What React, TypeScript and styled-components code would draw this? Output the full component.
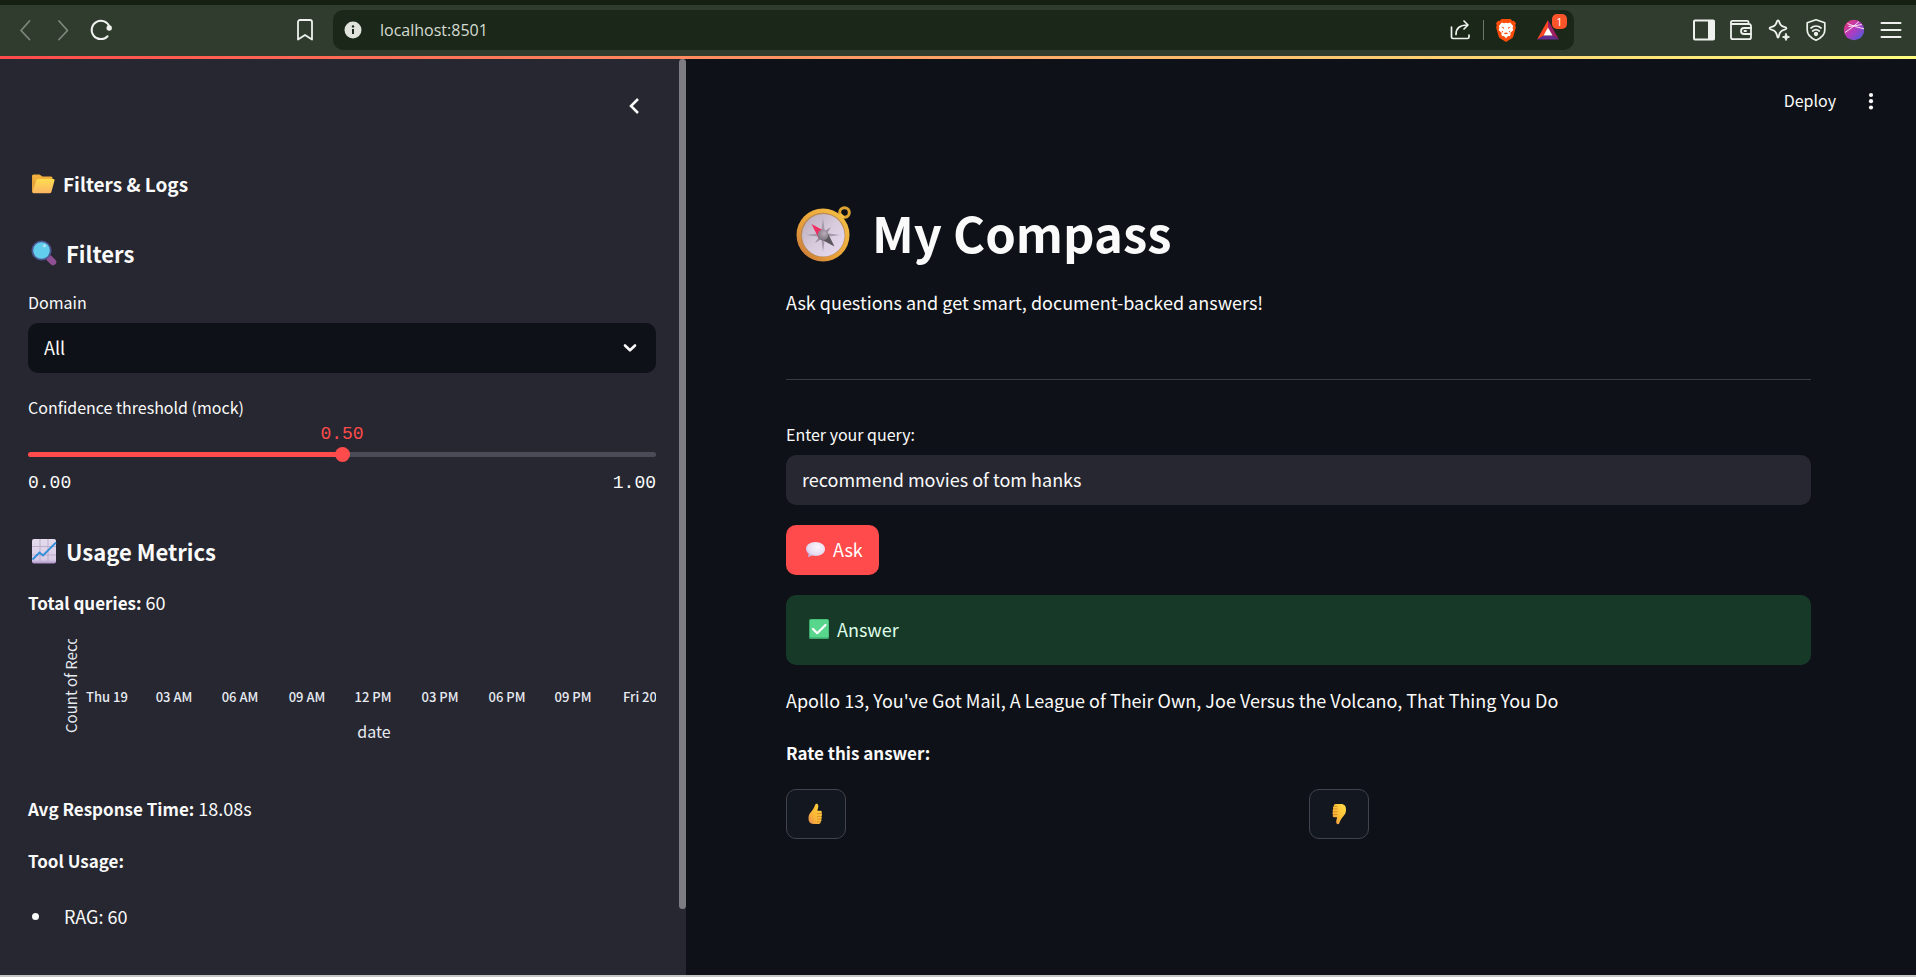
import React, { useState } from "react";
import styled, { createGlobalStyle } from "styled-components";

const GlobalStyle = createGlobalStyle`
  *, *::before, *::after { box-sizing: border-box; }
  body {
    margin: 0;
    background: #0e1117;
    color: #fafafa;
    font-family: "Noto Sans CJK JP", "Noto Sans", sans-serif;
    font-size: 18px;
    line-height: 28px;
  }
  button, input, select { font: inherit; color: inherit; margin: 0; }
  h1, h2, h3, p, ul { margin: 0; padding: 0; }
  svg { display: block; flex: none; }
`;

/* ---------- Browser chrome ---------- */

const Shell = styled.div`
  display: flex;
  flex-direction: column;
  min-height: 100vh;
  border-bottom: 2px solid #c6c6c6;
`;

const BrowserBar = styled.header`
  display: flex;
  align-items: center;
  height: 56px;
  padding: 0 13px 1px;
  background: #303d2e;
  border-top: 5px solid #162012;
`;

const NavGroup = styled.nav`
  display: flex;
  align-items: center;
  gap: 14px;
  flex: 0 0 320px;
`;

const BookmarkSlot = styled.div`
  margin-left: auto;
  margin-right: 16px;
`;

const ToolbarButton = styled.button<{ $dim?: boolean }>`
  display: grid;
  place-items: center;
  width: 24px;
  height: 24px;
  padding: 0;
  border: 0;
  background: none;
  color: ${(p) => (p.$dim ? "#7d877b" : "#eef1ed")};
`;

const AddressBar = styled.div`
  display: flex;
  align-items: center;
  flex: 1;
  min-width: 0;
  height: 40px;
  padding: 0 6px 0 11px;
  border-radius: 10px;
  background: #1b2819;
`;

const AddressInput = styled.input`
  flex: 1;
  min-width: 0;
  padding: 0;
  margin-left: 18px;
  border: 0;
  outline: 0;
  background: none;
  color: #d5dbd2;
  font-family: "Open Sans", "Noto Sans", sans-serif;
  font-size: 16px;
  line-height: 24px;
`;

const AddressActions = styled.div`
  display: flex;
  align-items: center;
  gap: 10px;
`;

const Divider = styled.span`
  width: 1px;
  height: 20px;
  background: #6d776b;
`;

const ExtensionButton = styled(ToolbarButton)`
  position: relative;
  width: 40px;
  height: 32px;
`;

const ExtensionBadge = styled.span`
  position: absolute;
  top: 0;
  right: 1px;
  width: 15px;
  height: 15px;
  border-radius: 5px;
  background: #fb542b;
  color: #fff;
  font-family: "Open Sans", sans-serif;
  font-size: 11px;
  line-height: 15px;
  text-align: center;
`;

const BrowserTools = styled.div`
  display: flex;
  align-items: center;
  justify-content: space-between;
  flex: 0 0 211px;
  margin-left: 118px;
`;

const RainbowLine = styled.div`
  height: 3px;
  background: linear-gradient(90deg, #ff4b4b, #fffd80);
`;

/* ---------- App layout ---------- */

const AppBody = styled.div`
  display: flex;
  flex: 1;
`;

const Sidebar = styled.aside`
  position: relative;
  flex: 0 0 686px;
  padding: 27px 30px 30px 28px;
  background: #262730;
`;

const ScrollThumb = styled.div`
  position: absolute;
  top: 0;
  right: 0;
  bottom: 66px;
  width: 7px;
  border-radius: 4px;
  background: #7d7c82;
`;

const SidebarTop = styled.div`
  display: flex;
  justify-content: flex-end;
  padding-right: 2px;
`;

const IconButton = styled.button`
  display: grid;
  place-items: center;
  width: 40px;
  height: 40px;
  padding: 0;
  border: 0;
  background: none;
`;

const SidebarTitle = styled.h2`
  display: flex;
  align-items: center;
  gap: 8px;
  margin-top: 44px;
  padding-left: 3px;
  font-size: 19px;
  line-height: 28px;
  font-weight: 600;
`;

const SectionTitle = styled.h3<{ $gap: number }>`
  display: flex;
  align-items: center;
  gap: 9px;
  margin-top: ${(p) => p.$gap}px;
  padding-left: 3px;
  font-size: 22px;
  line-height: 30px;
  font-weight: 600;
`;

const FieldLabel = styled.label<{ $gap: number }>`
  display: block;
  margin-top: ${(p) => p.$gap}px;
  margin-bottom: 9px;
  font-size: 16px;
  line-height: 24px;
`;

const SelectBox = styled.div`
  position: relative;
  display: flex;
  align-items: center;
`;

const Select = styled.select`
  appearance: none;
  width: 100%;
  height: 50px;
  padding: 0 48px 2px 16px;
  border: 0;
  border-radius: 10px;
  background: #0e1117;
`;

const SelectArrow = styled.span`
  position: absolute;
  right: 18px;
  pointer-events: none;
`;

const SliderLabel = styled(FieldLabel)`
  margin-bottom: 5px;
`;

const SliderValue = styled.output`
  display: block;
  color: #ff4b4b;
  font-family: "Liberation Mono", monospace;
  font-size: 18px;
  line-height: 20px;
  text-align: center;
`;

const Slider = styled.input`
  appearance: none;
  display: block;
  width: 100%;
  height: 15px;
  margin-top: 3px;
  background: none;

  &::-webkit-slider-runnable-track {
    height: 5px;
    border-radius: 3px;
    background: linear-gradient(
      to right,
      #ff4b4b var(--filled),
      #4a4b57 var(--filled)
    );
  }
  &::-webkit-slider-thumb {
    appearance: none;
    width: 15px;
    height: 15px;
    margin-top: -5px;
    border-radius: 50%;
    background: #ff4b4b;
  }
`;

const SliderRange = styled.div`
  display: flex;
  justify-content: space-between;
  margin-top: 11px;
  font-family: "Liberation Mono", monospace;
  font-size: 18px;
  line-height: 20px;
`;

const Text = styled.p<{ $gap?: number }>`
  margin-top: ${(p) => p.$gap ?? 24}px;
  strong { font-size: 17px; line-height: 20px; font-weight: 600; }
`;

const ChartSvg = styled.svg`
  width: 100%;
  height: 131px;
  margin-top: 23px;
  overflow: hidden;
  fill: #e6eaf1;
`;

const ToolList = styled.ul`
  margin-top: 28px;
  padding-left: 4px;
  list-style: none;
`;

const ToolItem = styled.li`
  display: flex;
  align-items: center;
  gap: 25px;
  &::before {
    content: "";
    width: 7px;
    height: 7px;
    border-radius: 50%;
    background: #fafafa;
  }
`;

const Main = styled.main`
  flex: 1;
  min-width: 0;
`;

const MainHeader = styled.div`
  display: flex;
  align-items: center;
  justify-content: flex-end;
  gap: 15px;
  height: 84px;
  padding-right: 25px;
`;

const DeployButton = styled.button`
  padding: 0 0 2px;
  border: 0;
  background: none;
  font-size: 16px;
  line-height: 24px;
`;

const Content = styled.div`
  padding: 56px 105px 80px 100px;
`;

const PageTitle = styled.h1`
  display: flex;
  align-items: center;
  gap: 20px;
  padding-left: 10px;
  font-size: 49px;
  line-height: 66px;
  font-weight: 700;

  svg { margin-top: 4px; }
`;

const Rule = styled.hr`
  height: 1px;
  margin: 63px 0 42px;
  border: 0;
  background: #3a3c42;
`;

const QueryInput = styled.input`
  display: block;
  width: 100%;
  height: 50px;
  padding: 0 16px 2px;
  border: 0;
  border-radius: 10px;
  outline: 0;
  background: #262730;
`;

const AskButton = styled.button`
  display: flex;
  align-items: center;
  gap: 7px;
  height: 50px;
  margin-top: 20px;
  padding: 0 16px 2px 19px;
  border: 0;
  border-radius: 10px;
  background: #ff4b4b;
  color: #fff;
`;

const AnswerBanner = styled.div`
  display: flex;
  align-items: center;
  gap: 7px;
  height: 70px;
  margin-top: 20px;
  padding: 0 22px 2px;
  border-radius: 10px;
  background: #173928;
  color: #dffde9;
`;

const RatingColumns = styled.div`
  display: grid;
  grid-template-columns: 1fr 1fr;
  gap: 20px;
  margin-top: 23px;
`;

const RateButton = styled.button`
  display: grid;
  place-items: center;
  width: 60px;
  height: 50px;
  padding: 0;
  border: 1px solid #41444c;
  border-radius: 10px;
  background: #131720;
`;

/* ---------- Toolbar icons ---------- */

const Stroke = ({ w = 2, children }: { w?: number; children: React.ReactNode }) => (
  <svg width="24" height="24" viewBox="0 0 24 24" fill="none" stroke="currentColor"
    strokeWidth={w} strokeLinecap="round" strokeLinejoin="round" aria-hidden="true">
    {children}
  </svg>
);

const ReloadIcon = () => (
  <Stroke>
    <path d="M18.6 18.2A9.2 9.2 0 1 1 20.6 9" />
    <circle cx="20.2" cy="10" r="2.7" fill="currentColor" stroke="none" />
  </Stroke>
);

const InfoIcon = () => (
  <svg width="18" height="18" viewBox="0 0 18 18" aria-hidden="true">
    <circle cx="9" cy="9" r="8.5" fill="#dfe3dc" />
    <circle cx="9" cy="5.4" r="1.2" fill="#1b2819" />
    <path d="M9 8v5" stroke="#1b2819" strokeWidth="2" />
  </svg>
);

const BraveIcon = () => (
  <svg width="22" height="24" viewBox="0 0 22 24" aria-hidden="true">
    <path d="M6.500 1h9l1.900 2 1.500-.2L21 5.200l-.8 2 .7 2-2.600 9.300c-.3 1-1 1.600-1.700 2.100L11 24l-5.600-3.400c-.8-.5-1.400-1.100-1.700-2.100L1.100 9.200l.7-2-.8-2 2.100-2.400 1.500.2z" fill="#fb4c0a" />
    <path d="M6.800 4.600l2.300.6 1.900-.5 1.900.5 2.300-.6 2.900 3.500-.5 2 .7 2-3 2.900.4 1.600-1 1.600-1.400-.1-1.300.9-1 1.400-1-1.400-1.300-.9-1.400.1-1-1.600.4-1.600-3-2.900.7-2-.5-2z" fill="#fff" />
    <path d="M6 8.600l3 .9-.4 1.400zM16 8.600l-3 .9.400 1.400zM8.400 15.300l2.600-.9 2.600.9-2.600 1zM6.600 12.600l1.600 1-.8 1.200zM15.400 12.600l-1.600 1 .8 1.200z" fill="#fb4c0a" />
  </svg>
);

const BatIcon = () => (
  <svg width="24" height="22" viewBox="0 0 24 22" aria-hidden="true">
    <path d="M12 1L1 20.500l7-4L12 9z" fill="#ff4724" />
    <path d="M12 1l11 19.500-7-4L12 9z" fill="#9e1f63" />
    <path d="M1 20.500h22l-7-4H8z" fill="#662d91" />
    <path d="M12 8.600L16.500 16.500h-9z" fill="#fff" />
  </svg>
);

const ShareIcon = () => (
  <Stroke w={1.7}>
    <path d="M2.500 9v10a1.500 1.500 0 0 0 1.500 1.500h14.500A1.500 1.500 0 0 0 20 19v-2" />
    <path d="M7 16.500C7 10.500 10.500 7 18.500 7M15 3l4 4-4 4" />
  </Stroke>
);

const ShieldWifiIcon = () => (
  <Stroke w={1.7}>
    <path d="M12 1.800l8.800 3v7.200c0 5-4.300 8.300-8.800 10.200C7.500 20.300 3.200 17 3.200 12V4.800z" />
    <path d="M7 10c3-2.700 7-2.700 10 0M8.700 13c2-1.700 4.600-1.700 6.600 0" />
    <circle cx="12" cy="16" r="1.300" fill="currentColor" />
  </Stroke>
);

const GlobeIcon = () => (
  <svg width="22" height="22" viewBox="0 0 22 22" aria-hidden="true">
    <defs>
      <linearGradient id="globe" x1="0" y1="0" x2="1" y2="1">
        <stop offset="0" stopColor="#f0386b" />
        <stop offset=".5" stopColor="#b13bc0" />
        <stop offset="1" stopColor="#3b63e0" />
      </linearGradient>
    </defs>
    <circle cx="11" cy="11" r="10.200" fill="url(#globe)" />
    <path d="M4.500 4.600Q12 8 21 9.800M2 13.500Q9 9 16 2.600M5.500 7.500Q12 7 18.800 5.500" fill="none" stroke="#fbe3f3" strokeWidth="1" />
  </svg>
);

/* ---------- Emoji pictograms ---------- */

const FolderEmoji = () => (
  <svg width="24" height="20" viewBox="0 0 24 20" aria-hidden="true">
    <defs>
      <linearGradient id="folder" x1="0" y1="0" x2="0" y2="1">
        <stop offset="0" stopColor="#ffdc4f" />
        <stop offset="1" stopColor="#fbb563" />
      </linearGradient>
    </defs>
    <path d="M1 2q0-1.500 1.500-1.500H8.500L11.500 2.500H20q1.500 0 1.500 1.500V10H1z" fill="#f2b03f" />
    <path d="M1 2v15.500L3 19l3-8z" fill="#e8a33c" />
    <path d="M7.500 5h15q1.500 0 1 1.500L20.400 18q-.4 1.300-1.800 1.300H2.600Q1 19.300 1.500 17.700L5.300 6.500Q5.900 5 7.500 5z" fill="url(#folder)" />
  </svg>
);

const MagnifierEmoji = () => (
  <svg width="26" height="26" viewBox="0 0 26 26" aria-hidden="true">
    <path d="M16 16l2 2" stroke="#6d5a86" strokeWidth="3" />
    <path d="M18.500 18.500l3.500 3.500" stroke="#8f4f94" strokeWidth="6.500" strokeLinecap="round" />
    <circle cx="10.500" cy="10.500" r="9.200" fill="#62cdec" stroke="#4b5690" strokeWidth="1.700" />
    <circle cx="13.500" cy="5.800" r="1.600" fill="#a9e6f7" />
  </svg>
);

const ChartEmoji = () => (
  <svg width="26" height="26" viewBox="0 0 26 26" aria-hidden="true">
    <defs>
      <linearGradient id="paper" x1="0" y1="0" x2="0" y2="1">
        <stop offset="0" stopColor="#e4dcec" />
        <stop offset=".85" stopColor="#d9cbe6" />
        <stop offset="1" stopColor="#ac8fc9" />
      </linearGradient>
    </defs>
    <rect x="1" y="1" width="24" height="24.500" rx="2" fill="url(#paper)" />
    <path d="M9 1v24M17 1v24M1 8.500h24M1 17h24" stroke="#bdaecb" strokeWidth="1" />
    <path d="M1.500 21.500L8.500 14.500 12 17.500 25 4.500" fill="none" stroke="#318fd8" strokeWidth="1.900" />
  </svg>
);

const CompassEmoji = () => (
  <svg width="56" height="58" viewBox="0 0 56 58" aria-hidden="true">
    <defs>
      <linearGradient id="brass" x1="1" y1="0" x2="0" y2="1">
        <stop offset="0" stopColor="#f6c445" />
        <stop offset=".6" stopColor="#e8a03a" />
        <stop offset="1" stopColor="#c4703a" />
      </linearGradient>
      <linearGradient id="dial" x1="0" y1="0" x2="1" y2="1">
        <stop offset="0" stopColor="#b5a8b8" />
        <stop offset=".5" stopColor="#d8cbdc" />
        <stop offset="1" stopColor="#e9dcf3" />
      </linearGradient>
      <radialGradient id="hub" cx=".6" cy=".35" r=".7">
        <stop offset="0" stopColor="#b9adb9" />
        <stop offset="1" stopColor="#77707a" />
      </radialGradient>
    </defs>
    <circle cx="48.500" cy="7.500" r="4.800" fill="none" stroke="#dda431" strokeWidth="3" />
    <path d="M43 14l4-4" stroke="#f3c33f" strokeWidth="5" />
    <circle cx="27" cy="30" r="26.500" fill="url(#brass)" />
    <circle cx="27" cy="30" r="22.300" fill="#b98a55" />
    <circle cx="27.300" cy="30.300" r="21.300" fill="url(#dial)" />
    <path d="M27 13l2 15L44 30l-15 2L27 47l-2-15L10 30l15-2z" fill="#a69bad" />
    <path d="M35 22l-5 8-3-3zM19 38l8-5-3-3z" fill="#9a90a0" />
    <path d="M15.500 19l13 7-6 7z" fill="#ee2f63" />
    <path d="M38.500 41.500l-13-7 6-7z" fill="#5b555e" />
    <circle cx="27" cy="30" r="5.400" fill="url(#hub)" />
  </svg>
);

const SpeechEmoji = () => (
  <svg width="21" height="17" viewBox="0 0 21 17" aria-hidden="true">
    <defs>
      <radialGradient id="bubble" cx=".6" cy=".35" r=".7">
        <stop offset="0" stopColor="#faf6fc" />
        <stop offset=".7" stopColor="#e6dcf0" />
        <stop offset="1" stopColor="#c3aede" />
      </radialGradient>
    </defs>
    <path d="M10.500 1C16 1 20 4 20 8s-4 7-9.500 7c-1.300 0-2.500-.2-3.600-.5L3.700 16c-.5.200-.7-.1-.6-.5L3.700 12.800C2 11.500 1 9.900 1 8c0-4 4-7 9.500-7z" fill="url(#bubble)" />
  </svg>
);

const CheckEmoji = () => (
  <svg width="22" height="22" viewBox="0 0 22 22" aria-hidden="true">
    <rect x="1" y="1" width="20" height="20" rx="1.500" fill="#3ba86b" />
    <rect x="2" y="1.500" width="18.500" height="18" rx="1.500" fill="#57d68c" />
    <path d="M5 11l4.200 4.200L17.500 7" fill="none" stroke="#fff" strokeWidth="2.200" strokeLinecap="round" strokeLinejoin="round" />
  </svg>
);

const ThumbUpEmoji = () => (
  <svg width="18" height="22" viewBox="0 0 18 22" aria-hidden="true">
    <defs>
      <linearGradient id="skinUp" x1="1" y1="0" x2="0" y2="1">
        <stop offset="0" stopColor="#ffd63f" />
        <stop offset=".6" stopColor="#fbb636" />
        <stop offset="1" stopColor="#e88a4e" />
      </linearGradient>
    </defs>
    <path d="M8.300 1.600C8.800.400 11.300.500 11.300 3c0 2-.8 3.500-.9 4.700h3.100c1.300 0 1.900 1.800.8 2.600 1 .6 1 2.300 0 2.900.8.700.7 2.200-.2 2.800.7.800.5 2.300-.5 2.800.2 1.400-.7 2.100-1.900 2.100H6.500C3 20.900 1.500 18.500 1.500 15.500c0-3.500 1-4.700 2.500-6.500C6 6.600 7.300 4.500 8.300 1.600z"
      fill="url(#skinUp)" />
    <path d="M10 10.600h4.100M9.800 13.300h4.200M9.900 16h3.900M10.100 18.800h3.300" stroke="#d98a2b" strokeWidth=".9" />
  </svg>
);

const ThumbDownEmoji = () => (
  <svg width="18" height="22" viewBox="0 0 18 22" aria-hidden="true">
    <defs>
      <linearGradient id="skinDown" x1="1" y1="0" x2="0" y2="1">
        <stop offset="0" stopColor="#ffde45" />
        <stop offset=".6" stopColor="#fbbb36" />
        <stop offset="1" stopColor="#e88a4e" />
      </linearGradient>
    </defs>
    <path d="M9.200 20.400c-.5 1.200-3 1.100-3-1.400 0-2 .8-3.500.9-4.700H4c-1.300 0-1.900-1.800-.8-2.600-1-.6-1-2.300 0-2.900-.8-.7-.7-2.200.2-2.800-.7-.8-.5-2.300.5-2.800C3.700 1.800 4.600 1.100 5.800 1.100h5.200c3.500 0 5 2.400 5 5.400 0 3.500-1 4.700-2.500 6.500-2 2.400-3.300 4.500-4.300 7.400z"
      fill="url(#skinDown)" />
    <path d="M3.500 11.500h4.100M3.500 8.700h4.200M3.800 6h3.900M4.300 3.300h3.300" stroke="#d98a2b" strokeWidth=".9" />
  </svg>
);

/* ---------- Sidebar chart ---------- */

const TICKS = ["Thu 19", "03 AM", "06 AM", "09 AM", "12 PM", "03 PM", "06 PM", "09 PM", "Fri 20"];

const UsageChart = () => (
  <ChartSvg role="img" aria-label="Count of Records by date">
    <text transform="translate(49 94) rotate(-90)" fontSize="15">Count of Records</text>
    {TICKS.map((tick, i) => (
      <text key={tick} x={79 + Math.round(i * 66.6)} y="63" fontSize="13" fontWeight="500" textAnchor="middle">
        {tick}
      </text>
    ))}
    <text x="346" y="99" fontSize="16" textAnchor="middle">date</text>
  </ChartSvg>
);

export default function App() {
  const [threshold, setThreshold] = useState(0.5);
  const [query, setQuery] = useState("recommend movies of tom hanks");

  return (
    <>
      <GlobalStyle />
      <Shell>
        <BrowserBar>
          <NavGroup aria-label="Browser navigation">
            <ToolbarButton $dim aria-label="Back">
              <Stroke w={1.8}><path d="M16.500 3L8 12.500l8.500 9" /></Stroke>
            </ToolbarButton>
            <ToolbarButton $dim aria-label="Forward">
              <Stroke w={1.8}><path d="M8 3l8.500 9.500-8.500 9" /></Stroke>
            </ToolbarButton>
            <ToolbarButton aria-label="Reload"><ReloadIcon /></ToolbarButton>
            <BookmarkSlot>
              <ToolbarButton aria-label="Bookmark this page">
                <Stroke w={1.8}><path d="M5 4a2 2 0 0 1 2-2h10a2 2 0 0 1 2 2v17.500l-7-4.500-7 4.500z" /></Stroke>
              </ToolbarButton>
            </BookmarkSlot>
          </NavGroup>
          <AddressBar>
            <InfoIcon />
            <AddressInput aria-label="Address" defaultValue="localhost:8501" />
            <AddressActions>
              <ToolbarButton aria-label="Share"><ShareIcon /></ToolbarButton>
              <Divider />
              <ToolbarButton aria-label="Brave Shields"><BraveIcon /></ToolbarButton>
              <ExtensionButton aria-label="Rewards">
                <BatIcon />
                <ExtensionBadge>1</ExtensionBadge>
              </ExtensionButton>
            </AddressActions>
          </AddressBar>
          <BrowserTools>
            <ToolbarButton aria-label="Side panel">
              <Stroke>
                <rect x="2" y="2.500" width="20" height="19" rx="1" />
                <path d="M17 3h4.500v18H17z" fill="currentColor" />
              </Stroke>
            </ToolbarButton>
            <ToolbarButton aria-label="Wallet">
              <Stroke w={1.8}>
                <path d="M2 4.500v14.700a2 2 0 0 0 2 2h16a2 2 0 0 0 2-2V8a2 2 0 0 0-2-2H3.500a1.500 1.500 0 0 1 0-3.200H18a1.500 1.500 0 0 1 1.500 1.500V6" />
                <path d="M22 10h-7a3 3 0 0 0-3 3v0a3 3 0 0 0 3 3h7" />
                <path d="M15.500 13h1.500" />
              </Stroke>
            </ToolbarButton>
            <ToolbarButton aria-label="Assistant">
              <Stroke w={1.8}>
                <path d="M11 2.500c.7 0 1 .5 1.200 1.300.7 3 1.700 4.300 4.800 5 1 .3 2.500.5 2.500 1.500s-1.500 1.200-2.500 1.500c-3.100.7-4.100 2-4.800 5-.2 1-.5 2.700-1.200 2.700s-1-1.700-1.200-2.700c-.7-3-1.700-4.300-4.800-5-1-.3-2.500-.5-2.500-1.500S4 9.100 5 8.800c3.100-.7 4.100-2 4.800-5C10 3 10.300 2.500 11 2.500z" />
                <path d="M19 15.500l1 2.500 2.500 1-2.500 1-1 2.500-1-2.500-2.500-1 2.500-1z" fill="currentColor" strokeWidth="1" />
              </Stroke>
            </ToolbarButton>
            <ToolbarButton aria-label="VPN"><ShieldWifiIcon /></ToolbarButton>
            <ToolbarButton aria-label="Profile"><GlobeIcon /></ToolbarButton>
            <ToolbarButton aria-label="Menu">
              <Stroke><path d="M2.500 5h19M2.500 12h19M2.500 19h19" /></Stroke>
            </ToolbarButton>
          </BrowserTools>
        </BrowserBar>
        <RainbowLine />

        <AppBody>
          <Sidebar>
            <ScrollThumb />
            <SidebarTop>
              <IconButton aria-label="Collapse sidebar">
                <svg width="12" height="18" viewBox="0 0 12 18" fill="none" stroke="#fafafa" strokeWidth="2.500">
                  <path d="M10 2L3 9l7 7" />
                </svg>
              </IconButton>
            </SidebarTop>
            <SidebarTitle><FolderEmoji />Filters &amp; Logs</SidebarTitle>
            <SectionTitle $gap={40}><MagnifierEmoji />Filters</SectionTitle>

            <FieldLabel $gap={22} htmlFor="domain">Domain</FieldLabel>
            <SelectBox>
              <Select id="domain" defaultValue="All">
                <option>All</option>
              </Select>
              <SelectArrow>
                <svg width="16" height="12" viewBox="0 0 16 12" fill="none" stroke="#fafafa" strokeWidth="2.600" strokeLinecap="round" strokeLinejoin="round">
                  <path d="M3 3.500l5 4.800 5-4.800" />
                </svg>
              </SelectArrow>
            </SelectBox>

            <SliderLabel $gap={22} htmlFor="threshold">Confidence threshold (mock)</SliderLabel>
            <SliderValue htmlFor="threshold">{threshold.toFixed(2)}</SliderValue>
            <Slider
              id="threshold"
              type="range"
              min={0}
              max={1}
              step={0.01}
              value={threshold}
              onChange={(e) => setThreshold(Number(e.target.value))}
              style={{ "--filled": `${threshold * 100}%` } as React.CSSProperties}
            />
            <SliderRange><span>0.00</span><span>1.00</span></SliderRange>

            <SectionTitle $gap={43}><ChartEmoji />Usage Metrics</SectionTitle>
            <Text $gap={22}><strong>Total queries:</strong> 60</Text>
            <UsageChart />
            <Text><strong>Avg Response Time:</strong> 18.08s</Text>
            <Text><strong>Tool Usage:</strong></Text>
            <ToolList>
              <ToolItem>RAG: 60</ToolItem>
            </ToolList>
          </Sidebar>

          <Main>
            <MainHeader>
              <DeployButton>Deploy</DeployButton>
              <IconButton aria-label="More options">
                <svg width="6" height="18" viewBox="0 0 6 18" fill="#fafafa">
                  <circle cx="3" cy="3" r="2.100" />
                  <circle cx="3" cy="9.200" r="2.100" />
                  <circle cx="3" cy="15.500" r="2.100" />
                </svg>
              </IconButton>
            </MainHeader>
            <Content>
              <PageTitle><CompassEmoji />My Compass</PageTitle>
              <Text $gap={23}>Ask questions and get smart, document-backed answers!</Text>
              <Rule />
              <FieldLabel $gap={0} htmlFor="query">Enter your query:</FieldLabel>
              <QueryInput id="query" value={query} onChange={(e) => setQuery(e.target.value)} />
              <AskButton><SpeechEmoji />Ask</AskButton>
              <AnswerBanner role="status"><CheckEmoji />Answer</AnswerBanner>
              <Text $gap={21}>
                Apollo 13, You've Got Mail, A League of Their Own, Joe Versus the Volcano, That Thing You Do
              </Text>
              <Text><strong>Rate this answer:</strong></Text>
              <RatingColumns>
                <RateButton aria-label="Good answer"><ThumbUpEmoji /></RateButton>
                <RateButton aria-label="Bad answer"><ThumbDownEmoji /></RateButton>
              </RatingColumns>
            </Content>
          </Main>
        </AppBody>
      </Shell>
    </>
  );
}
